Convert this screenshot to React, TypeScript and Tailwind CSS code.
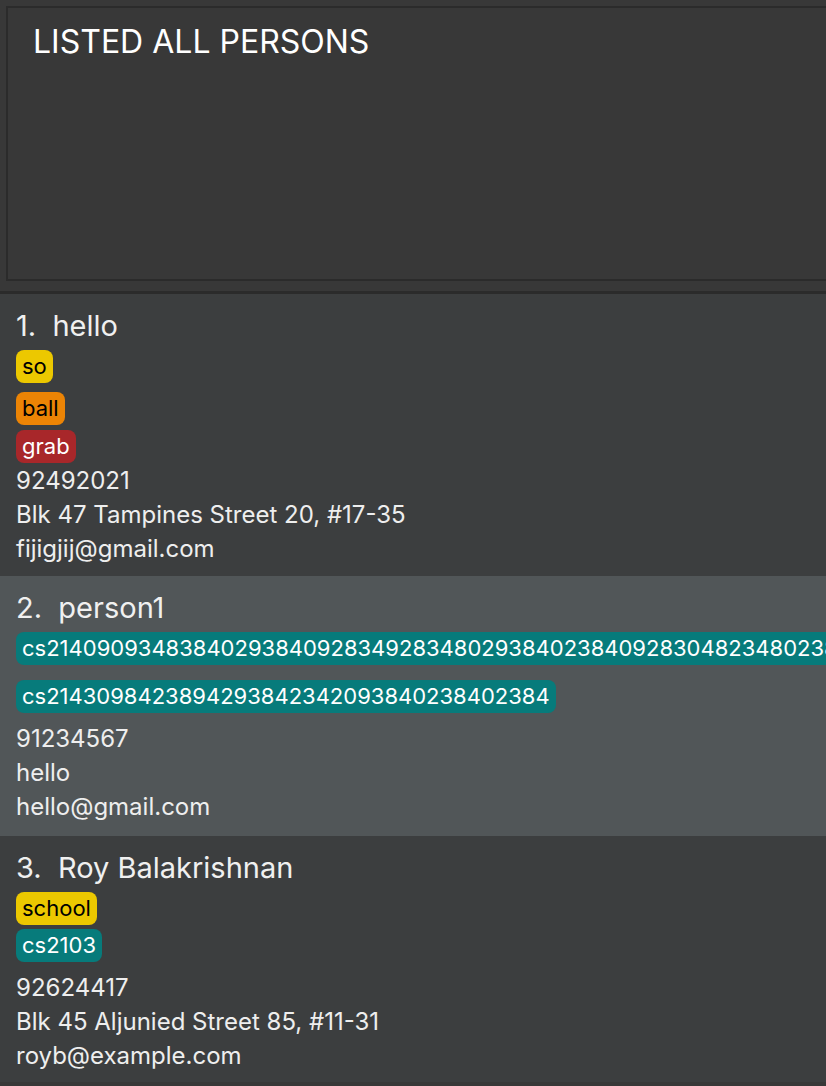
type TTag = {
  label: string
  color: 'yellow' | 'orange' | 'red' | 'teal'
  mt: string
}

type TPerson = {
  index: number
  name: string
  tags: TTag[]
  phone: string
  address: string
  email: string
  detailsMt: string
  bg: string
  h: string
}

const tagStyle = {
  yellow: 'bg-[#ecc800] text-black',
  orange: 'bg-[#ec8405] text-black',
  red: 'bg-[#a8272a] text-white',
  teal: 'bg-[#077b7b] text-white',
}

const persons: TPerson[] = [
  {
    index: 1,
    name: 'hello',
    tags: [
      {label: 'so', color: 'yellow', mt: 'mt-0'},
      {label: 'ball', color: 'orange', mt: 'mt-[9px]'},
      {label: 'grab', color: 'red', mt: 'mt-[5px]'},
    ],
    phone: '92492021',
    address: 'Blk 47 Tampines Street 20, #17-35',
    email: 'fijigjij@gmail.com',
    detailsMt: 'mt-[1px]',
    bg: 'bg-[#3c3e3f]',
    h: 'h-[282px]',
  },
  {
    index: 2,
    name: 'person1',
    tags: [
      {
        label:
          'cs214090934838402938409283492834802938402384092830482348023840923',
        color: 'teal',
        mt: 'mt-0',
      },
      {
        label: 'cs2143098423894293842342093840238402384',
        color: 'teal',
        mt: 'mt-[15px]',
      },
    ],
    phone: '91234567',
    address: 'hello',
    email: 'hello@gmail.com',
    detailsMt: 'mt-[9px]',
    bg: 'bg-[#515658]',
    h: 'h-[260px]',
  },
  {
    index: 3,
    name: 'Roy Balakrishnan',
    tags: [
      {label: 'school', color: 'yellow', mt: 'mt-0'},
      {label: 'cs2103', color: 'teal', mt: 'mt-[4px]'},
    ],
    phone: '92624417',
    address: 'Blk 45 Aljunied Street 85, #11-31',
    email: 'royb@example.com',
    detailsMt: 'mt-[9px]',
    bg: 'bg-[#3c3e3f]',
    h: 'h-[246px]',
  },
]

function Tag({label, color, mt}: TTag) {
  return (
    <div className={`${mt} flex`}>
      <span
        className={`${tagStyle[color]} h-[33px] px-[6px] rounded-[8px] text-[22px] leading-[33px] whitespace-nowrap`}
      >
        {label}
      </span>
    </div>
  )
}

function PersonCard({person}: {person: TPerson}) {
  return (
    <div className={`${person.bg} ${person.h} pl-4 overflow-hidden shrink-0`}>
      <div className="h-[56px] pt-[13px] text-[29px] leading-[38px] text-[#f0f0f0] whitespace-pre">
        {`${person.index}.  ${person.name}`}
      </div>
      <div className="flex flex-col">
        {person.tags.map((tag) => (
          <Tag key={tag.label} {...tag} />
        ))}
      </div>
      <div
        className={`${person.detailsMt} flex flex-col text-[24px] leading-[34px] text-[#eeeeee]`}
      >
        <div>{person.phone}</div>
        <div>{person.address}</div>
        <div>{person.email}</div>
      </div>
    </div>
  )
}

export default function App() {
  return (
    <div
      className="w-[826px] h-[1086px] bg-[#383838] overflow-hidden flex flex-col"
      style={{fontFamily: 'Inter, Roboto, "Noto Sans", sans-serif'}}
    >
      <div className="pl-[6px] pt-[6px] h-[291px] shrink-0">
        <div className="h-[275px] -mr-4 border-2 border-[#2b2b2b] pl-[25px] pt-[14px] text-[32px] leading-[40px] text-white">
          LISTED ALL PERSONS
        </div>
      </div>
      <div className="border-t-[3px] border-[#2b2b2b] flex flex-col">
        {persons.map((person) => (
          <PersonCard key={person.index} person={person} />
        ))}
      </div>
    </div>
  )
}
